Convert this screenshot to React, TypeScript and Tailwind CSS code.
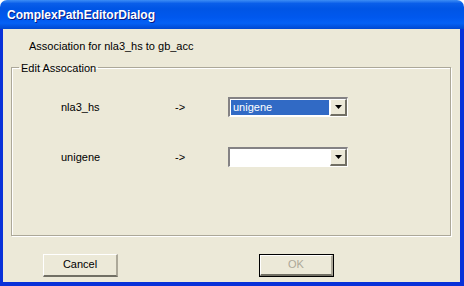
import React from "react";

const font = { fontFamily: '"Liberation Sans", Arial, sans-serif' };

function Combo({ value }: { value?: string }) {
  return (
    <div className="flex h-[20px] w-[120px] border-t-2 border-l-2 border-b border-r border-t-[#848284] border-l-[#848284] border-b-white border-r-white bg-white">
      <div className="flex flex-1 items-center p-[1px]">
        {value && (
          <div className="flex h-full w-full items-center bg-[#316AC5] px-[2px] text-[11px] text-white">
            {value}
          </div>
        )}
      </div>
      <div className="flex w-[17px] items-center justify-center border-t border-l border-b-2 border-r-2 border-t-white border-l-white border-b-[#716F64] border-r-[#716F64] bg-[#ECE9D8]">
        <svg width="7" height="4" viewBox="0 0 7 4">
          <path d="M0 0h7L3.5 4z" fill="#000" />
        </svg>
      </div>
    </div>
  );
}

function Button({ label, disabled }: { label: string; disabled?: boolean }) {
  return (
    <div
      className={
        "h-[23px] w-[75px] " + (disabled ? "border border-black" : "")
      }
    >
      <div className="flex h-full w-full items-center justify-center border-t border-l border-b-2 border-r-2 border-t-white border-l-white border-b-[#716F64] border-r-[#ACA899] bg-[#ECE9D8]">
        <span className={"text-[11px] " + (disabled ? "text-[#ACA899]" : "text-black")}>
          {label}
        </span>
      </div>
    </div>
  );
}

export default function App() {
  return (
    <div className="flex h-[286px] w-[464px] flex-col" style={font}>
      {/* Title bar */}
      <div className="flex h-[29px] items-center rounded-t-[7px] bg-[linear-gradient(to_bottom,#3D8DF5_0%,#0A5EE9_12%,#0055E5_30%,#0058EE_60%,#0461F5_80%,#0048D0_100%)] pl-[7px]">
        <span className="text-[12px] font-bold text-white [text-shadow:1px_1px_0_#0A1883]">
          ComplexPathEditorDialog
        </span>
      </div>

      {/* Body */}
      <div className="flex flex-1 flex-col border-l-[3px] border-r-[4px] border-b-[4px] border-[#0831D9] bg-[#ECE9D8] text-black">
        <div className="pl-[26px] pt-[9px] text-[11px]">
          Association for nla3_hs to gb_acc
        </div>

        <fieldset className="mx-[8px] mt-[5px] h-[176px] w-[440px] border border-[#ACA899] shadow-[inset_1px_1px_0_#fff,1px_1px_0_#fff]">
          <legend className="ml-[7px] px-[2px] text-[11px]">Edit Assocation</legend>
          <div className="grid grid-cols-[114px_53px_120px] items-center gap-y-[30px] pl-[49px] pt-[21px] text-[11px]">
            <span>nla3_hs</span>
            <span>-&gt;</span>
            <Combo value="unigene" />
            <span>unigene</span>
            <span>-&gt;</span>
            <Combo />
          </div>
        </fieldset>

        <div className="flex pl-[40px] pt-[18px]">
          <Button label="Cancel" />
          <div className="ml-[141px]">
            <Button label="OK" disabled />
          </div>
        </div>
      </div>
    </div>
  );
}
